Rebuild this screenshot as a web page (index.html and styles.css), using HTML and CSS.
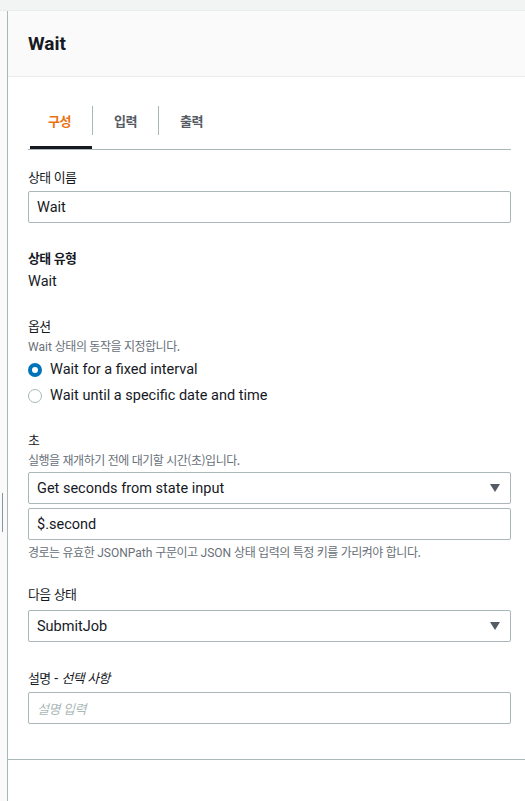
FILE: index.html
```html
<!DOCTYPE html>
<html lang="ko">
<head>
<meta charset="utf-8">
<title>Wait</title>
<link rel="stylesheet" href="styles.css">
</head>
<body>
<div class="topbar"></div>
<div class="main">
  <div class="gutter"><div class="handle"></div></div>
  <div class="panel">
    <div class="panel-header"><h2 class="title">Wait</h2></div>
    <div class="panel-body">
      <div class="tabs">
        <div class="tab active"><span class="ko">구성</span></div>
        <div class="tab"><span class="ko">입력</span></div>
        <div class="tab"><span class="ko">출력</span></div>
      </div>

      <div class="field f-name">
        <div class="label"><span class="ko">상태 이름</span></div>
        <div class="control"><span class="value">Wait</span></div>
      </div>

      <div class="field f-type">
        <div class="label strong"><span class="ko">상태 유형</span></div>
        <div class="plain">Wait</div>
      </div>

      <div class="field f-opt">
        <div class="label"><span class="ko">옵션</span></div>
        <div class="desc">Wait <span class="ko">상태의 동작을 지정합니다.</span></div>
        <div class="radios">
          <div class="radio-row"><span class="radio checked"></span><span>Wait for a fixed interval</span></div>
          <div class="radio-row"><span class="radio"></span><span>Wait until a specific date and time</span></div>
        </div>
      </div>

      <div class="field f-sec">
        <div class="label"><span class="ko">초</span></div>
        <div class="desc"><span class="ko">실행을 재개하기 전에 대기할 시간(초)입니다.</span></div>
        <div class="control select"><span class="value">Get seconds from state input</span><span class="caret"></span></div>
        <div class="control second"><span class="value">$.second</span></div>
        <div class="help"><span class="ko">경로는 유효한</span> JSONPath <span class="ko">구문이고</span> JSON <span class="ko">상태 입력의 특정 키를 가리켜야 합니다.</span></div>
      </div>

      <div class="field f-next">
        <div class="label"><span class="ko">다음 상태</span></div>
        <div class="control select"><span class="value">SubmitJob</span><span class="caret"></span></div>
      </div>

      <div class="field f-descr">
        <div class="label"><span class="ko">설명</span> - <em class="ko">선택 사항</em></div>
        <div class="control"><span class="placeholder ko">설명 입력</span></div>
      </div>
    </div>
    <div class="panel-footer"></div>
  </div>
</div>
</body>
</html>
```

FILE: styles.css
```css
* { box-sizing: border-box; }
html, body { margin: 0; padding: 0; }
body {
  width: 525px;
  height: 801px;
  overflow: hidden;
  background: #ffffff;
  color: #16191f;
  font-family: Roboto, "Noto Sans CJK KR", sans-serif;
  font-size: 14.5px;
}
.ko {
  font-family: "Noto Sans CJK KR", sans-serif;
  font-size: 0.92em;
  letter-spacing: -0.04em;
}
.topbar {
  height: 11px;
  background: #f2f3f3;
  border-bottom: 1px solid #eaeded;
}
.main {
  display: flex;
  height: 790px;
}
.gutter {
  width: 7px;
  background: #fafafa;
  display: flex;
  flex-direction: column;
  padding-top: 482px;
}
.handle {
  width: 1px;
  height: 39px;
  margin-left: 2px;
  background: #879596;
}
.panel {
  flex: 1;
  border-left: 1px solid #aab7b8;
  display: flex;
  flex-direction: column;
}
.panel-header {
  height: 66px;
  background: #fafafa;
  border-bottom: 1px solid #eaeded;
  display: flex;
  align-items: center;
  padding: 0 20px;
}
.title {
  margin: 0;
  font-size: 19px;
  font-weight: 700;
  line-height: 22px;
}
.panel-body {
  padding: 29px 14px 0 20px;
  height: 683px;
  border-bottom: 1px solid #aab7b8;
}
.tabs {
  display: flex;
  border-bottom: 1px solid #aab7b8;
  height: 44px;
}
.tab {
  position: relative;
  padding: 6px 21px 0 22px;
  line-height: 18px;
  font-weight: 700;
  color: #545b64;
  font-size: 14.5px;
}
.tab .ko { font-size: 0.9em; }
.tab + .tab::before {
  content: "";
  position: absolute;
  left: 0;
  top: 0;
  width: 1px;
  height: 29px;
  background: #aab7b8;
}
.tab.active {
  margin-left: 2px;
  padding-left: 18px;
  color: #ec7211;
}
.tab.active::after {
  content: "";
  position: absolute;
  left: 0;
  right: 0;
  bottom: 0;
  height: 3px;
  background: #16191f;
}
.field { display: flex; flex-direction: column; }
.label {
  line-height: 20px;
  font-size: 14px;
  color: #16191f;
}
.label em { font-style: italic; }
.label.strong { font-weight: 700; color: #16191f; }
.desc {
  font-size: 12px;
  line-height: 20px;
  color: #687078;
}
.desc .ko, .help .ko { font-size: 1em; }
.help {
  font-size: 12px;
  line-height: 18px;
  color: #687078;
  margin-top: 3px;
}
.control {
  height: 32px;
  border: 1px solid #aab7b8;
  border-radius: 2px;
  display: flex;
  align-items: center;
  padding: 0 8px;
  background: #ffffff;
}
.select { justify-content: space-between; padding-right: 10px; }
.caret {
  width: 0;
  height: 0;
  border-left: 5px solid transparent;
  border-right: 5px solid transparent;
  border-top: 8px solid #545b64;
}
.placeholder {
  color: #aab7b8;
  font-style: italic;
  font-size: 13px;
}
.plain { line-height: 22px; margin-top: 3px; }

.f-name { margin-top: 17px; }
.f-name .control { margin-top: 4px; }
.f-type { margin-top: 25px; }
.f-opt { margin-top: 23px; }
.radios { display: flex; flex-direction: column; gap: 4px; margin-top: 2px; }
.radio-row {
  display: flex;
  align-items: center;
  gap: 8px;
  line-height: 22px;
}
.radio {
  width: 14px;
  height: 14px;
  border-radius: 50%;
  border: 1px solid #aab7b8;
  background: #fff;
}
.radio.checked { border: 4px solid #0073bb; }
.f-sec { margin-top: 23px; }
.f-sec .select { margin-top: 1px; }
.f-sec .second { margin-top: 4px; }
.f-next { margin-top: 22px; }
.f-next .control { margin-top: 6px; }
.f-descr { margin-top: 26px; }
.f-descr .control { margin-top: 4px; }
```
